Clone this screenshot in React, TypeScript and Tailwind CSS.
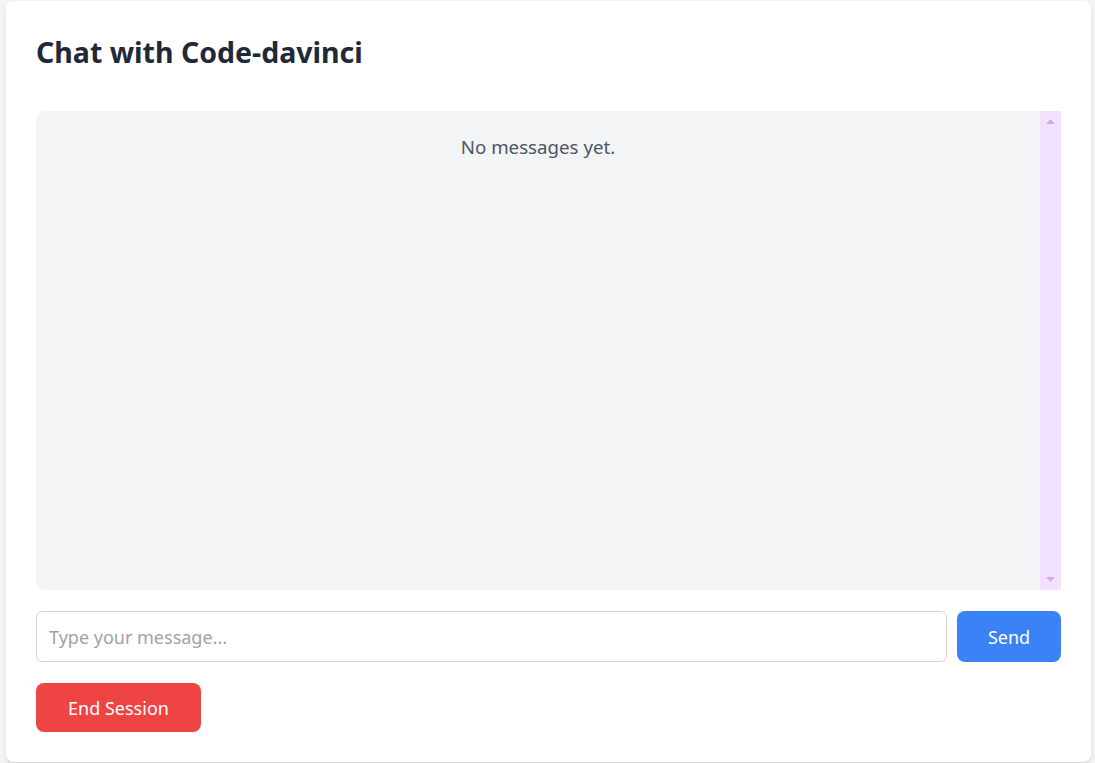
const ChatPanel = () => {
  return (
    <div className="min-h-screen bg-[#f3f4f6] pl-[6px] pr-[4px] pt-[1px] pb-[2px] font-['Noto_Sans',sans-serif]">
      <div className="rounded-lg bg-white p-[30px] shadow-md">
        {/* Header */}
        <h1 className="mt-[3px] mb-[41px] text-[28.5px] leading-9 font-bold text-[#1f2937]">
          Chat with Code-davinci
        </h1>

        {/* Message list with purple scroll track */}
        <div className="flex h-[479px]">
          <div className="flex-1 rounded-l-lg bg-[#f3f4f6] pt-[22px] text-center text-[18.7px] text-[#4b5563]">
            No messages yet.
          </div>
          <div className="flex w-[21px] flex-col items-center justify-between bg-[#f3e2fd] py-[8px]">
            <svg width="9" height="5" viewBox="0 0 9 5">
              <path d="M4.5 0L9 5H0z" fill="#d4a6f6" />
            </svg>
            <svg width="9" height="5" viewBox="0 0 9 5">
              <path d="M0 0h9L4.5 5z" fill="#d4a6f6" />
            </svg>
          </div>
        </div>

        {/* Input row */}
        <div className="mt-[21px] flex gap-[10px]">
          <input
            type="text"
            placeholder="Type your message..."
            className="h-[51px] flex-1 rounded-md border border-[#d1d5db] px-3 text-lg text-[#1f2937] placeholder:text-[#9ca3af] outline-none"
          />
          <button className="h-[51px] w-[104px] rounded-lg bg-[#3b82f6] text-lg text-white">
            Send
          </button>
        </div>

        <button className="mt-[21px] h-[49px] w-[165px] rounded-lg bg-[#ef4444] text-lg text-white">
          End Session
        </button>
      </div>
    </div>
  );
};

export default function App() {
  return <ChatPanel />;
}
